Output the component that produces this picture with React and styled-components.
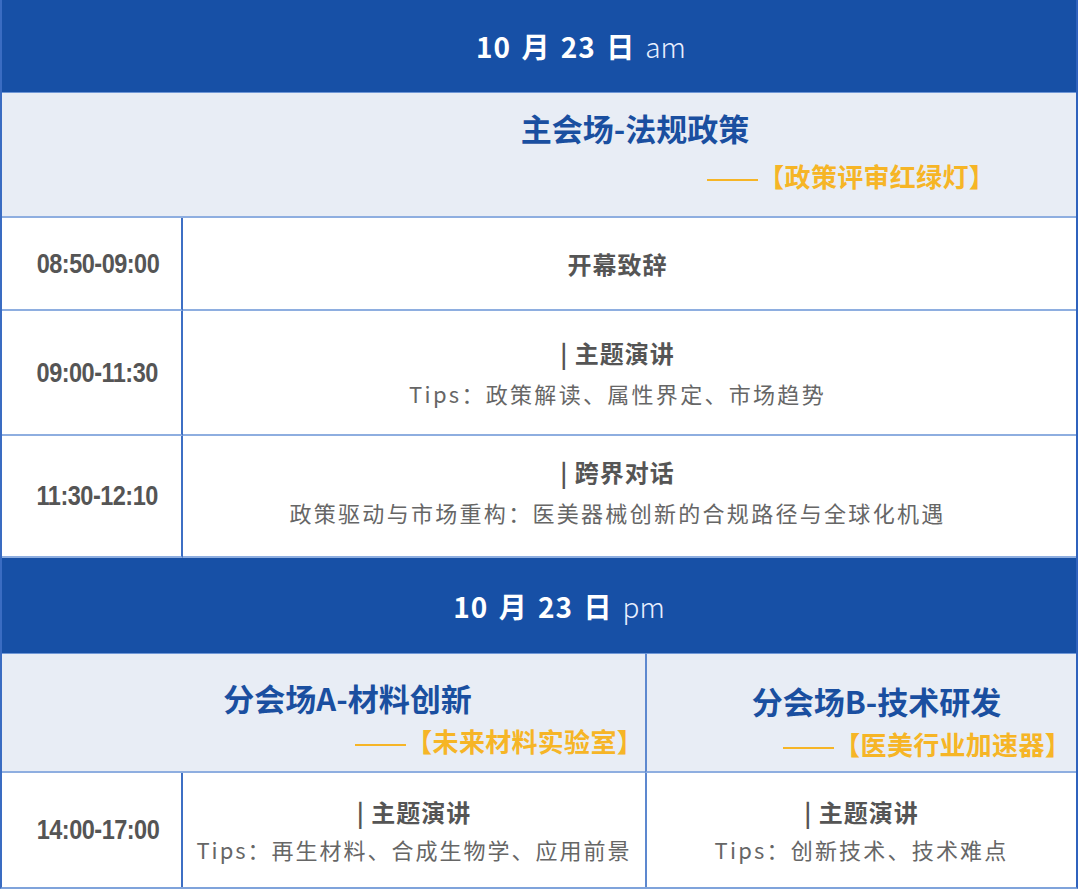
import styled, { createGlobalStyle } from 'styled-components'

const GlobalStyle = createGlobalStyle`
  html, body {
    margin: 0;
    padding: 0;
    background: #fff;
  }
  body {
    font-family: "Noto Sans CJK SC", "Noto Sans", sans-serif;
  }
`

const Table = styled.div`
  width: 1078px;
  display: grid;
  grid-template-columns: 181px 462px 1fr;
  border-left: 2px solid #3a6cc2;
  border-right: 2px solid #2f62bd;
  border-bottom: 2px solid #7fa3db;
  box-sizing: border-box;
`
const DayHeader = styled.div`
  grid-column: 1 / -1;
  height: ${(p) => p.$h}px;
  background: #1750a6;
  color: #fff;
  display: flex;
  align-items: center;
  justify-content: center;
  padding-left: ${(p) => p.$shift}px;
  font-size: 28px;
  font-weight: 700;
  letter-spacing: 1px;
  word-spacing: 3px;
  box-sizing: border-box;
  & span {
    font-weight: 300;
    margin-left: 10px;
    letter-spacing: 0;
    color: #e8efff;
  }
`
const SessionCell = styled.div`
  grid-column: ${(p) => p.$span};
  height: ${(p) => p.$h}px;
  background: #e8edf5;
  display: flex;
  flex-direction: column;
  padding-top: ${(p) => p.$top}px;
  box-sizing: border-box;
  border-top: 1px solid #6f97d6;
  border-bottom: 2px solid #8eaee0;
  & + & {
    border-left: 2px solid #5d88cf;
  }
`
const SessionTitle = styled.div`
  color: #1a4fa0;
  font-size: 31px;
  font-weight: 700;
  line-height: 34px;
  text-align: center;
  padding-left: ${(p) => p.$shift}px;
`
const SessionTag = styled.div`
  align-self: flex-end;
  margin-top: ${(p) => p.$gap}px;
  padding-right: ${(p) => p.$right}px;
  color: #f6b526;
  font-size: 26px;
  font-weight: 700;
  line-height: 29px;
  letter-spacing: 0.3px;
  white-space: nowrap;
`
const Dash = styled.span`
  display: inline-block;
  width: 51px;
  height: 2px;
  vertical-align: middle;
  background: #f6b526;
`
const TimeCell = styled.div`
  height: ${(p) => p.$h}px;
  display: flex;
  align-items: center;
  justify-content: center;
  padding-left: 12px;
  box-sizing: border-box;
  border-right: 2px solid #3d6fc4;
  border-bottom: ${(p) => (p.$last ? 'none' : '2px solid #8eaee0')};
`
const TimeText = styled.span`
  display: inline-block;
  font-family: "Liberation Sans", Arial, sans-serif;
  font-weight: 700;
  font-size: 28px;
  color: #555;
  letter-spacing: -0.6px;
  transform: scaleX(0.84);
  white-space: nowrap;
`
const ContentCell = styled.div`
  grid-column: ${(p) => p.$span};
  height: ${(p) => p.$h}px;
  display: flex;
  flex-direction: column;
  align-items: center;
  justify-content: center;
  gap: ${(p) => p.$gap}px;
  padding-right: ${(p) => p.$right || 0}px;
  padding-bottom: ${(p) => p.$lift || 0}px;
  box-sizing: border-box;
  border-bottom: ${(p) => (p.$last ? 'none' : '2px solid #8eaee0')};
  & + & {
    border-left: 2px solid #5d88cf;
  }
`
const TalkTitle = styled.div`
  color: #555;
  font-size: 24px;
  font-weight: 700;
  line-height: 31px;
  letter-spacing: 1px;
`
const TalkNote = styled.div`
  color: #666;
  font-size: 22px;
  font-weight: 400;
  line-height: 29px;
  letter-spacing: ${(p) => p.$spacing ?? 2.3}px;
  white-space: nowrap;
`

const morning = [
  { time: '08:50-09:00', title: '开幕致辞', h: 93 },
  { time: '09:00-11:30', title: '| 主题演讲', note: 'Tips：政策解读、属性界定、市场趋势', h: 125 },
  {
    time: '11:30-12:10',
    title: '| 跨界对话',
    note: '政策驱动与市场重构：医美器械创新的合规路径与全球化机遇',
    h: 122,
    lift: 10,
  },
]

const RowPair = ({ row }) => (
  <>
    <TimeCell $h={row.h}>
      <TimeText>{row.time}</TimeText>
    </TimeCell>
    <ContentCell $span="2 / -1" $h={row.h} $gap={11} $right={24} $lift={row.lift}>
      <TalkTitle>{row.title}</TalkTitle>
      {row.note && <TalkNote>{row.note}</TalkNote>}
    </ContentCell>
  </>
)

function App() {
  return (
    <>
      <GlobalStyle />
      <Table>
        <DayHeader $h={92} $shift={84}>
          10 月 23 日<span>am</span>
        </DayHeader>
        <SessionCell $span="1 / -1" $h={126} $top={18}>
          <SessionTitle $shift={192}>主会场-法规政策</SessionTitle>
          <SessionTag $gap={16} $right={81}>
            <Dash />【政策评审红绿灯】
          </SessionTag>
        </SessionCell>

        {morning.map((r, i) => (
          <RowPair key={i} row={r} />
        ))}

        <DayHeader $h={95} $shift={40}>
          10 月 23 日<span>pm</span>
        </DayHeader>
        <SessionCell $span="1 / 3" $h={120} $top={27}>
          <SessionTitle $shift={48}>分会场A-材料创新</SessionTitle>
          <SessionTag $gap={11} $right={2}>
            <Dash />【未来材料实验室】
          </SessionTag>
        </SessionCell>
        <SessionCell $span="3 / 4" $h={120} $top={30}>
          <SessionTitle $shift={30}>分会场B-技术研发</SessionTitle>
          <SessionTag $gap={11} $right={5}>
            <Dash />【医美行业加速器】
          </SessionTag>
        </SessionCell>

        <TimeCell $h={114} $last>
          <TimeText>14:00-17:00</TimeText>
        </TimeCell>
        <ContentCell $span="2 / 3" $h={114} $gap={8} $last>
          <TalkTitle>| 主题演讲</TalkTitle>
          <TalkNote $spacing={2}>Tips：再生材料、合成生物学、应用前景</TalkNote>
        </ContentCell>
        <ContentCell $span="3 / 4" $h={114} $gap={8} $last>
          <TalkTitle>| 主题演讲</TalkTitle>
          <TalkNote $spacing={2.2}>Tips：创新技术、技术难点</TalkNote>
        </ContentCell>
      </Table>
    </>
  )
}

export default App
